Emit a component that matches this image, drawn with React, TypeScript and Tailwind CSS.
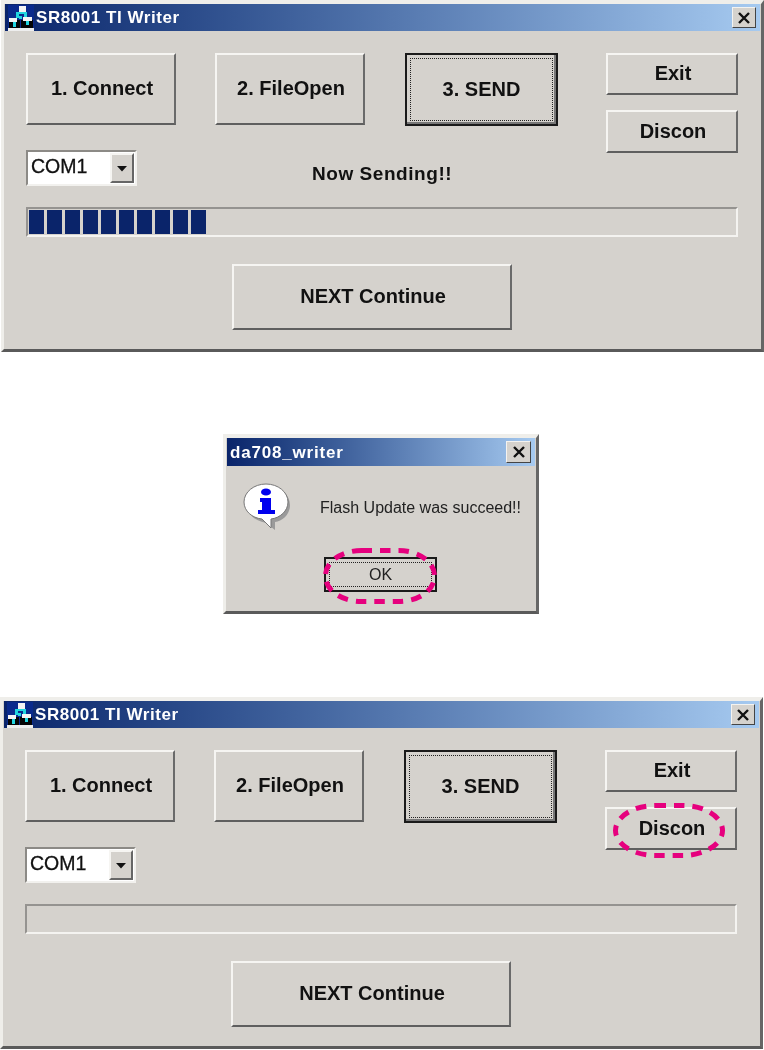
import React from "react";

const font = { fontFamily: '"Liberation Sans", Arial, sans-serif' };

function Logo() {
  return (
    <svg width="26" height="26" viewBox="0 0 26 26" className="shrink-0">
      <rect width="26" height="26" fill="#0a2a8c" />
      <rect x="0" y="23" width="26" height="3" fill="#eeeeee" />
      <path d="M11 1h7v6h-7z" fill="#f4f4f4" />
      <path d="M8 7h3v6H8zM16 7h3v6h-3zM8 7h11v2H8z" fill="#22d6e0" />
      <path d="M1 15h11v8H1zM13 15h12v8H13z" fill="#050505" />
      <path d="M1 13h8v4H1zM15 12h9v4h-9z" fill="#f4f4f4" />
      <path d="M5 17h3v5H5zM18 16h3v4h-3zM11 11h3v3h-3z" fill="#22d6e0" />
    </svg>
  );
}

function CloseBox({ className }: { className: string }) {
  return (
    <div className={`flex items-center justify-center bg-[#d5d2cd] border border-t-[#f4f3f0] border-l-[#f4f3f0] border-r-[#444] border-b-[#444] ${className}`}>
      <svg width="14" height="12" viewBox="0 0 14 12">
        <path d="M2 1l10 10M12 1L2 11" stroke="#111" strokeWidth="2.4" />
      </svg>
    </div>
  );
}

function Btn({ label, className, focus }: { label: string; className: string; focus?: boolean }) {
  if (focus) {
    return (
      <div className={`relative flex items-center justify-center border-2 border-[#1a1a1a] bg-[#d5d2cd] font-bold text-[20px] text-[#111] pb-[2px] ${className}`}>
        <div className="absolute inset-[3px] border border-dotted border-[#222]" />
        <span>{label}</span>
        <div className="absolute left-0 right-0 bottom-0 h-[2px] bg-[#777]" />
        <div className="absolute top-0 bottom-0 right-0 w-[2px] bg-[#777]" />
      </div>
    );
  }
  return (
    <div className={`flex items-center justify-center pb-[2px] pl-[2px] bg-[#d5d2cd] border-2 border-t-[#f6f5f2] border-l-[#f6f5f2] border-r-[#6a6a6a] border-b-[#5f5f5f] font-bold text-[20px] text-[#111] ${className}`}>
      {label}
    </div>
  );
}

function Combo() {
  return (
    <div className="w-[111px] h-[36px] flex border-2 border-t-[#8c8a86] border-l-[#8c8a86] border-r-[#f2f1ee] border-b-[#f2f1ee] bg-white p-px">
      <div className="flex-1 bg-white text-[19.5px] text-[#111] pl-[2px] leading-[27px] [-webkit-text-stroke:0.3px_#111]">COM1</div>
      <div className="w-[24px] bg-[#d5d2cd] border-2 border-t-[#f6f5f2] border-l-[#f6f5f2] border-r-[#666] border-b-[#666] flex items-center justify-center">
        <svg width="12" height="7" viewBox="0 0 12 7"><path d="M1 1h10L6 6.5z" fill="#111" /></svg>
      </div>
    </div>
  );
}

function Progress({ count }: { count: number }) {
  return (
    <div className="w-[712px] h-[30px] flex gap-[3px] px-px py-px border-2 border-t-[#959390] border-l-[#959390] border-r-[#f4f3f0] border-b-[#f4f3f0]">
      {Array.from({ length: count }).map((_, i) => (
        <div key={i} className="w-[15px] h-full bg-[#0a246a]" />
      ))}
    </div>
  );
}

function Win({ sending, offset, marked }: { sending: boolean; offset: string; marked?: boolean }) {
  return (
    <div className={`relative w-[763px] h-[352px] bg-[#d5d2cd] border-t-4 border-l-[3px] border-r-[3px] border-b-[3px] border-t-[#efeeea] border-l-[#efeeea] border-r-[#666] border-b-[#5a5a5a] ${offset}`}>
      <div className="mx-px h-[27px] flex items-center gap-[2px] pl-[3px] pr-[4px] bg-gradient-to-r from-[#0a246a] to-[#a6caf0]">
        <Logo />
        <span className="text-white font-bold text-[17px] tracking-[0.55px] flex-1 pt-[1px]">SR8001 TI Writer</span>
        <CloseBox className="w-[24px] h-[21px]" />
      </div>
      <div className="pl-[22px] pr-[23px] pt-[22px]">
        <div className="flex justify-between">
          <div className="w-[532px]">
            <div className="flex items-start gap-[39px]">
              <Btn label="1. Connect" className="w-[150px] h-[72px]" />
              <Btn label="2. FileOpen" className="w-[150px] h-[72px]" />
              <Btn label="3. SEND" className="w-[153px] h-[73px] ml-[1px]" focus />
            </div>
            <div className="flex mt-[24px] h-[36px]">
              <Combo />
              {sending && (
                <div className="ml-[175px] mt-[10px] font-bold text-[19px] leading-[28px] text-[#111] tracking-[0.55px]">Now Sending!!</div>
              )}
            </div>
          </div>
          <div className="flex flex-col gap-[15px]">
            <Btn label="Exit" className="w-[132px] h-[42px]" />
            <Btn label="Discon" className="w-[132px] h-[43px]" />
          </div>
        </div>
        <div className="mt-[21px]">
          <Progress count={sending ? 10 : 0} />
        </div>
        <div className="flex justify-center mt-[27px] pr-[20px]">
          <Btn label="NEXT Continue" className="w-[280px] h-[66px]" />
        </div>
      </div>
      {marked && (
        <svg width="112" height="55" viewBox="0 0 112 55" className="absolute left-[610px] top-[102px]">
          <rect x="2.5" y="2.5" width="107" height="50" rx="40" ry="25" fill="none" stroke="#e6007e" strokeWidth="5" strokeDasharray="10.5 8" />
        </svg>
      )}
    </div>
  );
}

function Dialog() {
  return (
    <div className="relative w-[316px] h-[180px] ml-[223px] mt-[82px] bg-[#d5d2cd] border-[3px] border-t-4 border-t-[#efeeea] border-l-[#efeeea] border-r-[#666] border-b-[#5a5a5a]">
      <div className="mx-px h-[28px] flex items-center pl-[3px] pr-[4px] bg-gradient-to-r from-[#0a246a] to-[#a6caf0]">
        <span className="flex-1 text-white font-bold text-[17px] tracking-[0.8px] pt-[1px]">da708_writer</span>
        <CloseBox className="w-[25px] h-[22px]" />
      </div>
      <div className="flex pl-[17px] pt-[17px]">
        <svg width="50" height="50" viewBox="0 0 50 50" className="shrink-0">
          <path d="M26 4c12 0 21 8 21 18 0 10-8 16-15 17v8l-9-7C12 38 5 32 5 22 5 12 14 4 26 4z" fill="#9a9a9a" />
          <path d="M23 1c12 0 22 8 22 18 0 9-8 16-17 17v9l-9-9C9 35 1 28 1 19 1 9 11 1 23 1z" fill="#fff" stroke="#777" strokeWidth="1" />
          <ellipse cx="23" cy="9" rx="5" ry="3.6" fill="#0000ee" />
          <path d="M17 15h11v12h4v4H15v-4h4v-8h-2z" fill="#0000ee" />
        </svg>
        <div className="ml-[27px] mt-[15px] text-[16px] leading-[20px] text-[#222] whitespace-nowrap">Flash Update was succeed!!</div>
      </div>
      <div className="flex justify-start mt-[24px] pl-[98px]">
        <div className="relative w-[113px] h-[35px] flex items-center justify-center border-2 border-[#1a1a1a] bg-[#d5d2cd] text-[16px] text-[#222]">
          <div className="absolute inset-[3px] border border-dotted border-[#222]" />
          <span>OK</span>
        </div>
      </div>
      <svg width="114" height="56" viewBox="0 0 114 56" className="absolute left-[97px] top-[110px]">
        <rect x="2.5" y="2.5" width="109" height="51" rx="36" ry="25" fill="none" stroke="#e6007e" strokeWidth="5" strokeDasharray="10.5 8" />
      </svg>
    </div>
  );
}

export default function App() {
  return (
    <div className="w-[764px] h-[1050px] bg-white overflow-hidden blur-[0.35px]" style={font}>
      <Win sending offset="ml-[1px]" />
      <Dialog />
      <div className="mt-[83px]">
        <Win sending={false} offset="ml-0" marked />
      </div>
    </div>
  );
}
